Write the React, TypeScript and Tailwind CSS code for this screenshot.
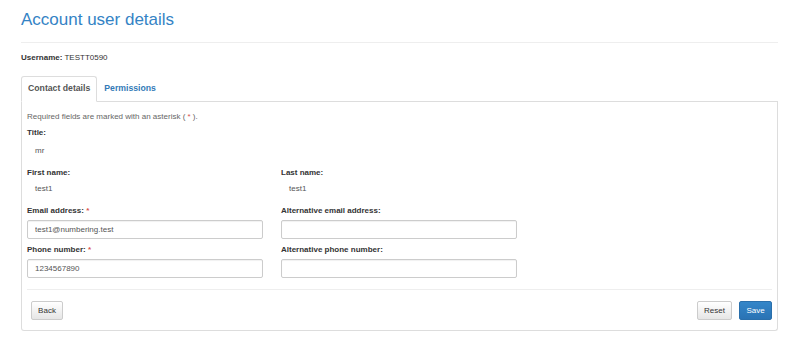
const Req = () => <span className="text-[#d9534f]"> *</span>;

interface FieldProps {
  label: string;
  required?: boolean;
  children: React.ReactNode;
}

function Field({ label, required, children }: FieldProps) {
  return (
    <div className="flex flex-col">
      <label className="font-bold text-[#333] leading-[14px]">
        {label}
        {required && <Req />}
      </label>
      {children}
    </div>
  );
}

const Static = ({ value }: { value: string }) => (
  <div className="mt-[2px] pl-[8px] leading-[14px] text-[#555]">{value}</div>
);

const Input = ({ value }: { value?: string }) => (
  <input
    readOnly
    value={value ?? ""}
    className="mt-[2px] h-[19px] w-[236px] rounded-[2px] border border-[#ccc] bg-white px-[7px] text-[8px] text-[#555] shadow-[inset_0_1px_1px_rgba(0,0,0,0.06)] outline-none"
  />
);

export default function App() {
  return (
    <div className="h-[341px] w-[800px] overflow-hidden bg-white pl-[21px] pr-[22px] font-['Liberation_Sans',Arial,sans-serif] text-[8px] text-[#333]">
      <div className="border-b border-[#eee] pt-[10px] pb-[12px]">
        <h1 className="text-[17px] leading-[20px] text-[#3483c5]">Account user details</h1>
      </div>

      <div className="mt-[9px] leading-[12px]">
        <span className="font-bold">Username:</span> TESTT0590
      </div>

      <div className="mt-[12px] flex border-b border-[#ddd] text-[8.7px] font-bold">
        <div className="-mb-px flex h-[26px] items-center rounded-t-[3px] border border-[#ddd] border-b-white bg-white px-[6px] text-[#555]">
          Contact details
        </div>
        <div className="flex h-[25px] items-center px-[7px] text-[#337ab7]">Permissions</div>
      </div>

      <div className="rounded-b-[3px] border border-t-0 border-[#ddd] px-[5px] pt-[8px] pb-[10px]">
        <p className="leading-[14px] text-[#666]">
          Required fields are marked with an asterisk (<Req /> ).
        </p>

        <div className="mt-[2px]">
          <Field label="Title:">
            <div className="mt-[4px] pl-[8px] leading-[14px] text-[#555]">mr</div>
          </Field>
        </div>

        <div className="mt-[8px] grid grid-cols-[236px_236px] gap-x-[18px]">
          <Field label="First name:">
            <Static value="test1" />
          </Field>
          <Field label="Last name:">
            <Static value="test1" />
          </Field>
        </div>

        <div className="mt-[8px] grid grid-cols-[236px_236px] gap-x-[18px] gap-y-[4px]">
          <Field label="Email address:" required>
            <Input value="test1@numbering.test" />
          </Field>
          <Field label="Alternative email address:">
            <Input />
          </Field>
          <Field label="Phone number:" required>
            <Input value="1234567890" />
          </Field>
          <Field label="Alternative phone number:">
            <Input />
          </Field>
        </div>

        <div className="mt-[11px] border-t border-[#eee] pt-[11px]">
          <div className="flex items-center justify-between pl-[4px]">
            <button className="h-[19px] w-[32px] rounded-[2px] border border-[#ccc] bg-gradient-to-b from-white to-[#e6e6e6] text-[8px] text-[#333]">
              Back
            </button>
            <div className="flex gap-[7px]">
              <button className="h-[19px] w-[35px] rounded-[2px] border border-[#ccc] bg-gradient-to-b from-white to-[#e6e6e6] text-[8px] text-[#333]">
                Reset
              </button>
              <button className="h-[19px] w-[33px] rounded-[2px] border border-[#2a6fab] bg-gradient-to-b from-[#3486c9] to-[#2a73b4] text-[8px] text-white">
                Save
              </button>
            </div>
          </div>
        </div>
      </div>
    </div>
  );
}
